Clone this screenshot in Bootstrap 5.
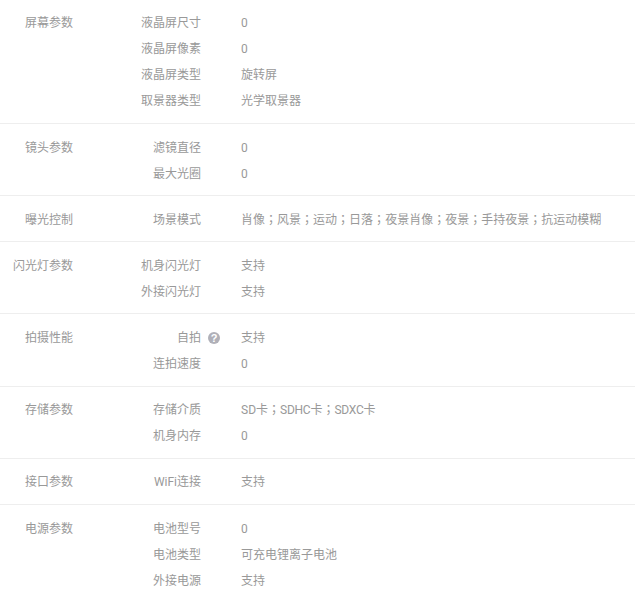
<!DOCTYPE html>
<html lang="zh-CN">
<head>
<meta charset="utf-8">
<title>参数</title>
<link href="https://cdn.jsdelivr.net/npm/bootstrap@5.3.0/dist/css/bootstrap.min.css" rel="stylesheet">
<style>
body{background:#fff;font-family:Roboto,"Noto Sans CJK SC",sans-serif;font-size:12px;line-height:26px;color:#999}
.spec-group{padding:11px 0 8px;border-bottom:1px solid #eee}
.spec-group:first-child{padding:10px 0 9px}
.spec-group:last-child{border-bottom:0}
.spec-tall{padding-bottom:9px}
.spec-tight{padding:10px 0 9px}
.spec-title{width:73px;text-align:right;flex:none;color:#999}
.spec-rows{flex:1;margin:0}
.spec-key{width:128px;flex:none;text-align:right;margin:0;font-weight:400;color:#999}
.spec-val{margin:0 0 0 40px;color:#999}
.spec-punct{font-family:"Noto Sans CJK TC",sans-serif;line-height:1}
.spec-latin{letter-spacing:-.25px}
.spec-tip{width:12px;height:12px;border-radius:50%;background:#b0b0b8;color:#fff;font:700 11px/12px "Liberation Sans",sans-serif;margin-left:7px;margin-right:-19px}
</style>
</head>
<body>
<div class="container-fluid p-0">
<section class="spec-group d-flex"><div class="spec-title">屏幕参数</div><dl class="spec-rows">
<div class="d-flex"><dt class="spec-key">液晶屏尺寸</dt><dd class="spec-val">0</dd></div>
<div class="d-flex"><dt class="spec-key">液晶屏像素</dt><dd class="spec-val">0</dd></div>
<div class="d-flex"><dt class="spec-key">液晶屏类型</dt><dd class="spec-val">旋转屏</dd></div>
<div class="d-flex"><dt class="spec-key">取景器类型</dt><dd class="spec-val">光学取景器</dd></div>
</dl></section>
<section class="spec-group d-flex"><div class="spec-title">镜头参数</div><dl class="spec-rows">
<div class="d-flex"><dt class="spec-key">滤镜直径</dt><dd class="spec-val">0</dd></div>
<div class="d-flex"><dt class="spec-key">最大光圈</dt><dd class="spec-val">0</dd></div>
</dl></section>
<section class="spec-group d-flex"><div class="spec-title">曝光控制</div><dl class="spec-rows">
<div class="d-flex"><dt class="spec-key">场景模式</dt><dd class="spec-val">肖像<span class="spec-punct" lang="zh-TW">；</span>风景<span class="spec-punct" lang="zh-TW">；</span>运动<span class="spec-punct" lang="zh-TW">；</span>日落<span class="spec-punct" lang="zh-TW">；</span>夜景肖像<span class="spec-punct" lang="zh-TW">；</span>夜景<span class="spec-punct" lang="zh-TW">；</span>手持夜景<span class="spec-punct" lang="zh-TW">；</span>抗运动模糊</dd></div>
</dl></section>
<section class="spec-group d-flex"><div class="spec-title">闪光灯参数</div><dl class="spec-rows">
<div class="d-flex"><dt class="spec-key">机身闪光灯</dt><dd class="spec-val">支持</dd></div>
<div class="d-flex"><dt class="spec-key">外接闪光灯</dt><dd class="spec-val">支持</dd></div>
</dl></section>
<section class="spec-group spec-tall d-flex"><div class="spec-title">拍摄性能</div><dl class="spec-rows">
<div class="d-flex"><dt class="spec-key d-flex justify-content-end align-items-center"><span>自拍</span><span class="spec-tip d-inline-block text-center">?</span></dt><dd class="spec-val">支持</dd></div>
<div class="d-flex"><dt class="spec-key">连拍速度</dt><dd class="spec-val">0</dd></div>
</dl></section>
<section class="spec-group spec-tight d-flex"><div class="spec-title">存储参数</div><dl class="spec-rows">
<div class="d-flex"><dt class="spec-key">存储介质</dt><dd class="spec-val">SD卡<span class="spec-punct" lang="zh-TW">；</span><span class="spec-latin">SDHC</span>卡<span class="spec-punct" lang="zh-TW">；</span><span class="spec-latin">SDXC</span>卡</dd></div>
<div class="d-flex"><dt class="spec-key">机身内存</dt><dd class="spec-val">0</dd></div>
</dl></section>
<section class="spec-group spec-tight d-flex"><div class="spec-title">接口参数</div><dl class="spec-rows">
<div class="d-flex"><dt class="spec-key">WiFi连接</dt><dd class="spec-val">支持</dd></div>
</dl></section>
<section class="spec-group d-flex"><div class="spec-title">电源参数</div><dl class="spec-rows">
<div class="d-flex"><dt class="spec-key">电池型号</dt><dd class="spec-val">0</dd></div>
<div class="d-flex"><dt class="spec-key">电池类型</dt><dd class="spec-val">可充电锂离子电池</dd></div>
<div class="d-flex"><dt class="spec-key">外接电源</dt><dd class="spec-val">支持</dd></div>
</dl></section>
</div>
</body>
</html>
